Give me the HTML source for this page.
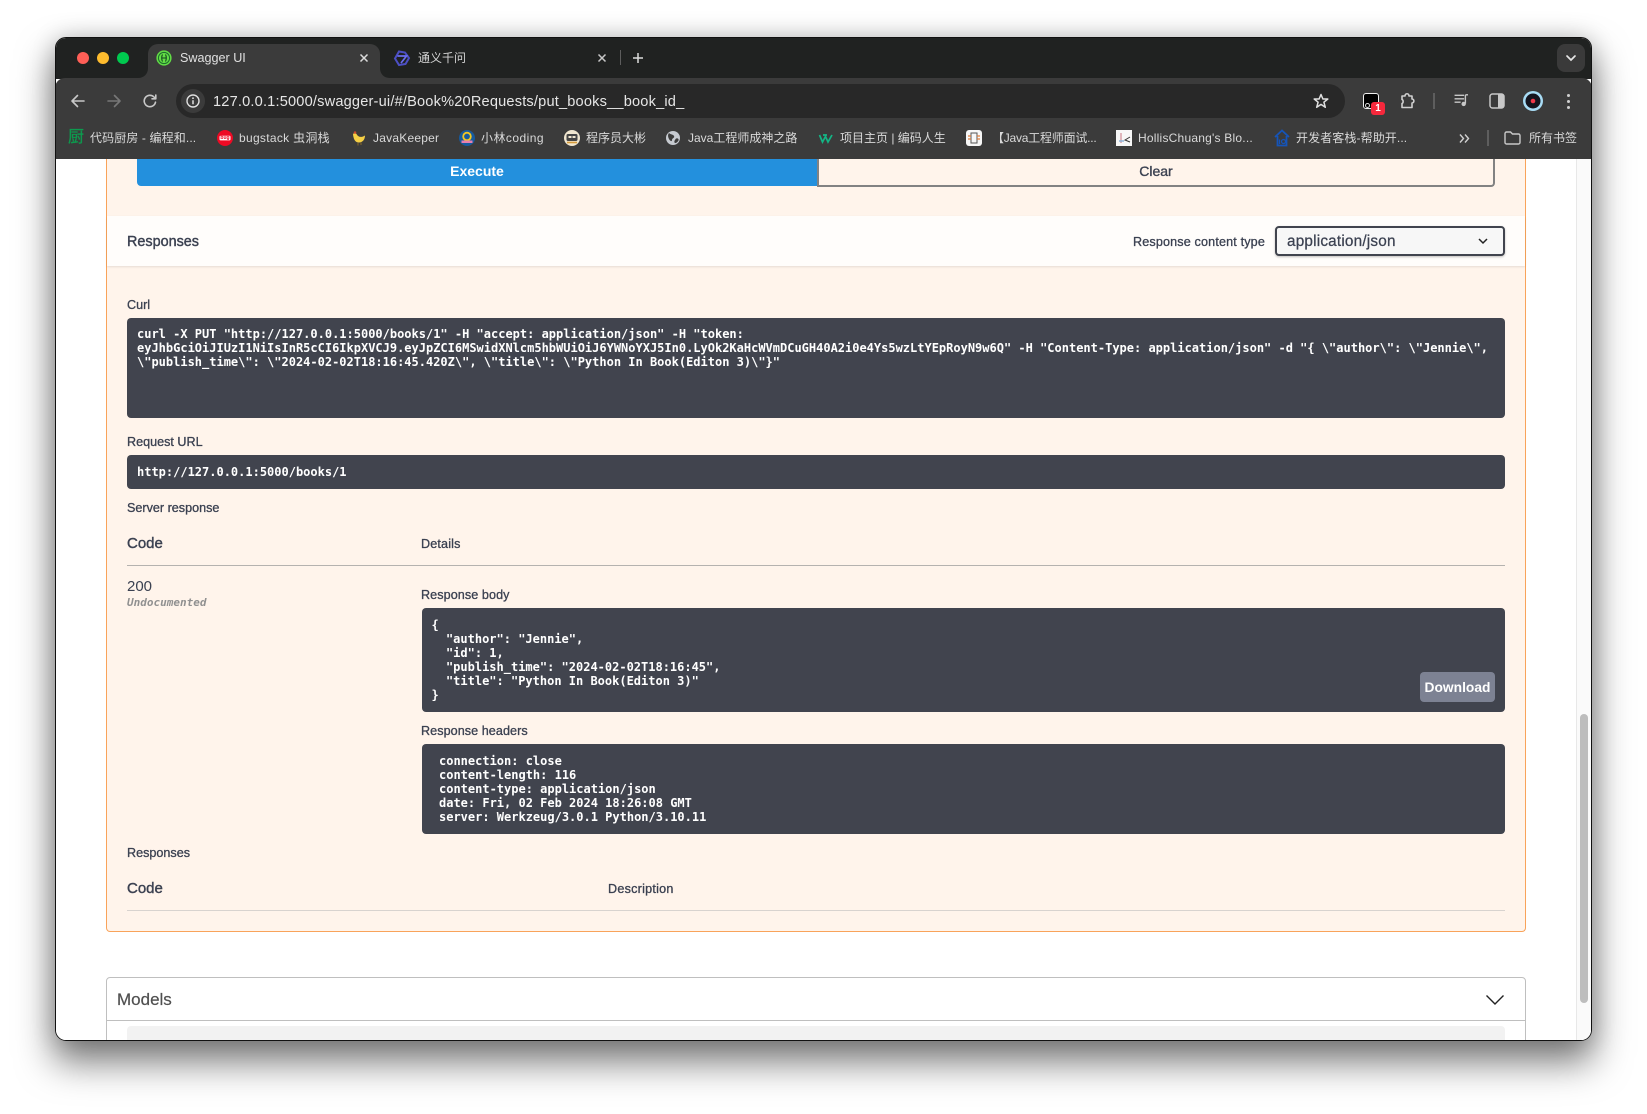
<!DOCTYPE html>
<html lang="zh"><head><meta charset="utf-8"><title>Swagger UI</title>
<style>
html,body{margin:0;padding:0;width:1647px;height:1114px;background:#fff;overflow:hidden}
*{box-sizing:border-box}
body{font-family:"Liberation Sans","Noto Sans CJK SC",sans-serif;position:relative}
.a{position:absolute;white-space:pre}
#win{position:absolute;left:55px;top:37px;width:1537px;height:1004px;border-radius:11px;box-shadow:0 20px 36px 2px rgba(0,0,0,.5),0 0 24px rgba(0,0,0,.18)}
#clip{position:absolute;left:55px;top:37px;width:1537px;height:1004px;border-radius:11px;overflow:hidden;background:#fff;border:1px solid #111}
#page{position:absolute;left:-56px;top:-38px;width:1647px;height:1114px}
.b{color:#d9d9d9;font-size:12px;line-height:16px;top:130px}
.l{color:#3b4151;font-size:12.6px;line-height:16px;font-weight:400;-webkit-text-stroke:.3px #3b4151}
.m{color:#3b4151;font-size:15px;line-height:18px;-webkit-text-stroke:.4px #3b4151}
.box{position:absolute;background:#41444e;border-radius:4px}
pre{position:absolute;margin:0;color:#fff;font:bold 12.01px/14px "DejaVu Sans Mono","Liberation Mono",monospace}
svg{position:absolute;overflow:visible}
.ic{fill:none;stroke:#c8c8c8;stroke-width:1.6;stroke-linecap:round;stroke-linejoin:round}
</style></head><body>
<div id="win"></div>
<div id="clip"><div id="page">
<!-- tab strip -->
<div class="a" style="left:55px;top:37px;width:1537px;height:42px;background:#202221"></div>
<div class="a" style="left:55px;top:78px;width:1537px;height:81px;background:#3b3b3b;border-radius:10px 10px 0 0"></div>
<div class="a" style="left:148px;top:44px;width:232px;height:35px;background:#3b3b3b;border-radius:10px 10px 0 0"></div>
<svg style="left:138px;top:68px" width="10" height="10"><path d="M10 0V10H0C6 10 10 6 10 0Z" fill="#3b3b3b"/></svg>
<svg style="left:380px;top:68px" width="10" height="10"><path d="M0 0V10H10C4 10 0 6 0 0Z" fill="#3b3b3b"/></svg>
<div class="a" style="left:77px;top:52px;width:12px;height:12px;border-radius:50%;background:#ff5f57"></div>
<div class="a" style="left:97px;top:52px;width:12px;height:12px;border-radius:50%;background:#febc2e"></div>
<div class="a" style="left:117px;top:52px;width:12px;height:12px;border-radius:50%;background:#00c94f"></div>
<!-- swagger favicon -->
<svg style="left:156px;top:50px" width="16" height="16" viewBox="0 0 16 16"><circle cx="8" cy="8" r="7.6" fill="#62dd45"/><circle cx="8" cy="8" r="5.6" fill="none" stroke="#1d6b2d" stroke-width="1"/><path d="M5.2 8H10.8M6.5 4.5C5.5 6 5.5 10 6.500 11.500M9.500 4.500C10.500 6 10.500 10 9.500 11.500" fill="none" stroke="#14451f" stroke-width="1.1"/></svg>
<div class="a" style="left:180px;top:50px;color:#e0e0e0;font-size:12.6px;line-height:16px">Swagger UI</div>
<svg style="left:360px;top:54px" width="8" height="8"><path d="M.5 .5L7.500 7.500M7.500 .5L.5 7.500" stroke="#dcdcdc" stroke-width="1.500"/></svg>
<!-- tab 2 -->
<svg style="left:394px;top:50px" width="16" height="17" viewBox="0 0 16 17"><path d="M5 1.500L11 2.500L15 8L11.500 14L5 15L1 8.500Z" fill="none" stroke="#4c4fc4" stroke-width="2"/><path d="M3.500 6H12.500L7 13" fill="none" stroke="#6a6df0" stroke-width="1.700"/></svg>
<div class="a" style="left:418px;top:50px;color:#d4d4d4;font-size:12px;line-height:16px">通义千问</div>
<svg style="left:598px;top:54px" width="8" height="8"><path d="M.5 .5L7.500 7.500M7.500 .5L.5 7.500" stroke="#c8c8c8" stroke-width="1.500"/></svg>
<div class="a" style="left:620px;top:50px;width:1px;height:15px;background:#5d5d5d"></div>
<svg style="left:633px;top:53px" width="10" height="10"><path d="M5 0V10M0 5H10" stroke="#dcdcdc" stroke-width="1.500"/></svg>
<div class="a" style="left:1557px;top:44px;width:28px;height:28px;border-radius:8px;background:#3a3a3a"></div>
<svg style="left:1566px;top:55px" width="10" height="7"><path d="M1 1L5 5L9 1" fill="none" stroke="#e6e6e6" stroke-width="1.700" stroke-linecap="round"/></svg>
<!-- toolbar -->
<svg class="ic" style="left:71px;top:94px" width="14" height="14" viewBox="0 0 14 14"><path d="M13 7H1.500M6.500 1.500L1 7L6.500 12.500"/></svg>
<svg class="ic" style="left:107px;top:94px;stroke:#777" width="14" height="14" viewBox="0 0 14 14"><path d="M1 7H12.500M7.500 1.500L13 7L7.500 12.500"/></svg>
<svg class="ic" style="left:143px;top:94px" width="14" height="14" viewBox="0 0 14 14"><path d="M12.500 8.200A5.700 5.700 0 1 1 11 3L12.800 4.800M12.800 1V4.800H9"/></svg>
<div class="a" style="left:176px;top:84px;width:1169px;height:34px;border-radius:17px;background:#282828"></div>
<div class="a" style="left:181px;top:89px;width:24px;height:24px;border-radius:50%;background:#3b3b3b"></div>
<svg style="left:186px;top:94px" width="14" height="14" viewBox="0 0 14 14"><circle cx="7" cy="7" r="6" fill="none" stroke="#e0e0e0" stroke-width="1.400"/><path d="M7 6.200V10.300" stroke="#e0e0e0" stroke-width="1.500"/><circle cx="7" cy="4.200" r=".9" fill="#e0e0e0"/></svg>
<div class="a" style="left:213px;top:93px;color:#e6e6e6;font-size:14.6px;line-height:18px;letter-spacing:.18px">127.0.0.1:5000/swagger-ui/#/Book%20Requests/put_books__book_id_</div>
<svg style="left:1313px;top:93px" width="16" height="16" viewBox="0 0 16 16"><path d="M8 1.500L9.900 6H14.800L10.900 9.200L12.300 14.300L8 11.400L3.700 14.300L5.100 9.200L1.200 6H6.100Z" fill="none" stroke="#e0e0e0" stroke-width="1.500" stroke-linejoin="round"/></svg>
<div class="a" style="left:1363px;top:93px;width:16px;height:16px;border-radius:3px;background:#000;border:1px solid #eee"></div>
<div class="a" style="left:1365px;top:103px;width:5px;height:5px;border-radius:50%;border:1px solid #ddd"></div>
<div class="a" style="left:1371px;top:102px;width:14px;height:13px;border-radius:3px;background:#f5283c;color:#fff;font:bold 10px/13px 'Liberation Sans',sans-serif;text-align:center">1</div>
<svg class="ic" style="left:1399px;top:92px;stroke:#d0d0d0" width="16" height="18" viewBox="0 0 16 18"><path d="M3 4H6C6 1 10 1 10 4H13V7C15.500 7 15.500 11 13 11V15.500H3V11.500C4.500 11 4.500 8 3 7.500Z"/></svg>
<div class="a" style="left:1433px;top:93px;width:2px;height:16px;background:#5e5e5e"></div>
<svg style="left:1454px;top:94px" width="15" height="13" viewBox="0 0 16 15"><path d="M0 1.500H11M0 5.500H11M0 9.500H7" stroke="#c8c8c8" stroke-width="1.600"/><path d="M12.500 1V11" stroke="#c8c8c8" stroke-width="1.600"/><path d="M12.500 1H15.500" stroke="#c8c8c8" stroke-width="1.600"/><circle cx="10.500" cy="11.500" r="2.500" fill="#c8c8c8"/></svg>
<svg style="left:1489px;top:93px" width="16" height="16" viewBox="0 0 16 16"><rect x="1" y="1" width="14" height="14" rx="2.500" fill="none" stroke="#c8c8c8" stroke-width="1.500"/><path d="M9 1H13A2 2 0 0 1 15 3V13A2 2 0 0 1 13 15H9Z" fill="#c8c8c8"/></svg>
<svg style="left:1523px;top:91px" width="20" height="20" viewBox="0 0 20 20"><circle cx="10" cy="10" r="10" fill="#a8dcf5"/><circle cx="10" cy="10" r="7.500" fill="#14141e"/><circle cx="10" cy="10" r="2.300" fill="#f0384a"/></svg>
<div class="a" style="left:1567px;top:93.500px;width:3px;height:3px;border-radius:50%;background:#d0d0d0"></div>
<div class="a" style="left:1567px;top:99.500px;width:3px;height:3px;border-radius:50%;background:#d0d0d0"></div>
<div class="a" style="left:1567px;top:105.500px;width:3px;height:3px;border-radius:50%;background:#d0d0d0"></div>
<!-- bookmarks -->
<div class="a" style="left:68px;top:129px;color:#0d9a4e;font-size:16px;line-height:18px;-webkit-text-stroke:.3px #0d9a4e">厨</div>
<div class="a b" style="left:90px;letter-spacing:.12px">代码厨房 - 编程和...</div>
<svg style="left:217px;top:130px" width="16" height="16" viewBox="0 0 16 16"><circle cx="8" cy="8" r="8" fill="#ee0a24"/><rect x="2.500" y="5.800" width="11" height="4.600" rx="1" fill="#fff"/></svg>
<div class="a" style="left:217px;top:130px;width:16px;text-align:center;font:bold 5px/16px 'Liberation Sans',sans-serif;color:#ee0a24">bug</div>
<div class="a b" style="left:239px;letter-spacing:.3px">bugstack 虫洞栈</div>
<svg style="left:351px;top:130px" width="16" height="17" viewBox="0 0 16 17"><path d="M2 4.500C2 3 4.500 2.500 5.500 4C7 7 10 8 14 5.500C14 10 11 13 7 12.500C3.500 12 2.500 8 2 4.500Z" fill="#f5cf45"/><circle cx="4" cy="2.500" r="1.300" fill="#c9482e"/><path d="M7 13V15.500M10 12.500V15" stroke="#8a6a2a" stroke-width="1"/></svg>
<div class="a b" style="left:373px;letter-spacing:.22px">JavaKeeper</div>
<svg style="left:459px;top:130px" width="16" height="16" viewBox="0 0 16 16"><circle cx="8" cy="8" r="8" fill="#175a9c"/><circle cx="8" cy="6.500" r="3.800" fill="none" stroke="#f2c623" stroke-width="1.800"/><path d="M2.500 10.500H13.500V13H2.500Z" fill="#e77fb0"/></svg>
<div class="a b" style="left:481px;letter-spacing:.45px">小林coding</div>
<svg style="left:564px;top:130px" width="16" height="16" viewBox="0 0 16 16"><circle cx="8" cy="8" r="8" fill="#f0e6cf"/><rect x="2.500" y="4" width="11" height="7" rx="1.500" fill="#454545"/><rect x="4.500" y="6" width="3" height="2" fill="#f0e6cf"/><rect x="8.500" y="6" width="3" height="2" fill="#f0e6cf"/><path d="M3 12.500H13" stroke="#d59a3a" stroke-width="1.600"/></svg>
<div class="a b" style="left:586px">程序员大彬</div>
<svg style="left:666px;top:131px" width="14" height="14" viewBox="0 0 14 14"><circle cx="7" cy="7" r="7" fill="#c6cad0"/><path d="M3 2C5 4 7 3 8 5C9 7 6 7 6 9C6 11 4 10 3 8C2 6 1.500 4 3 2ZM10 7.500C12 7 13 8 12.500 9.500C11 12 9 12.500 8.500 11.500C8 10 9 9 10 7.500Z" fill="#3b3b3b"/></svg>
<div class="a b" style="left:688px">Java工程师成神之路</div>
<svg style="left:819px;top:134px" width="14" height="9" viewBox="0 0 14 9"><path d="M.5 1L3.500 8L6.500 2.500L9 8L13 1M4 1H8" fill="none" stroke="#13b585" stroke-width="1.700"/></svg>
<div class="a b" style="left:840px">项目主页 | 编码人生</div>
<div class="a" style="left:966px;top:130px;width:16px;height:16px;border-radius:3px;background:#f7f7f7"></div>
<svg style="left:966px;top:130px" width="16" height="16" viewBox="0 0 16 16"><rect x="5" y="3" width="6" height="10" fill="none" stroke="#555" stroke-width="1"/><path d="M2 6H5M11 6H14M2 9H5M11 9H14" stroke="#e07b39" stroke-width="1.200"/></svg>
<div class="a b" style="left:992px;letter-spacing:-.22px">【Java工程师面试...</div>
<div class="a" style="left:1116px;top:130px;width:16px;height:16px;background:#f7f7f7"></div>
<svg style="left:1116px;top:130px" width="16" height="16" viewBox="0 0 16 16"><path d="M5 3V13" stroke="#d8a0a8" stroke-width="1.500"/><path d="M3 11H8" stroke="#8fb4d8" stroke-width="1.500"/><path d="M14 7L9 10L14 12" fill="none" stroke="#333" stroke-width="1"/></svg>
<div class="a b" style="left:1138px;letter-spacing:.22px">HollisChuang's Blo...</div>
<svg style="left:1274px;top:129px" width="16" height="18" viewBox="0 0 16 18"><path d="M1 8L8 1.500L15 8M3.500 7V16.500H12.500V7" fill="none" stroke="#1554b8" stroke-width="1.800"/><circle cx="9.500" cy="12.500" r="2" fill="none" stroke="#1554b8" stroke-width="1.200"/><path d="M5.500 10.500V15" stroke="#1554b8" stroke-width="1.200"/></svg>
<div class="a b" style="left:1296px;letter-spacing:.1px">开发者客栈-帮助开...</div>
<svg style="left:1459px;top:134px" width="11" height="9" viewBox="0 0 11 9"><path d="M1 .5L4.500 4.500L1 8.500M6 .5L9.500 4.500L6 8.500" fill="none" stroke="#d0d0d0" stroke-width="1.400"/></svg>
<div class="a" style="left:1487px;top:130px;width:2px;height:16px;background:#5e5e5e"></div>
<svg style="left:1504px;top:131px" width="17" height="14" viewBox="0 0 17 14"><path d="M1 2.500A1.500 1.500 0 0 1 2.500 1H6.500L8.500 3H14.500A1.500 1.500 0 0 1 16 4.500V11.500A1.500 1.500 0 0 1 14.500 13H2.500A1.500 1.500 0 0 1 1 11.500Z" fill="none" stroke="#c8c8c8" stroke-width="1.400"/></svg>
<div class="a b" style="left:1529px">所有书签</div>

<!-- content area -->
<div class="a" style="left:55px;top:159px;width:1537px;height:882px;background:#fff"></div>
<div class="a" style="left:1576px;top:159px;width:16px;height:882px;background:#fafafa;border-left:1px solid #e8e8e8"></div>
<div class="a" style="left:1580px;top:714px;width:8px;height:289px;border-radius:4px;background:#bdbdbd"></div>
<!-- opblock -->
<div class="a" style="left:106px;top:159px;width:1420px;height:773px;background:#fff4eb;border:1px solid #f9a35a;border-top:0;border-radius:0 0 4px 4px"></div>
<div class="a" style="left:137px;top:159px;width:680px;height:27px;background:#2390dd;border-radius:0 0 0 4px;color:#fff;font:bold 14px/24px 'Liberation Sans',sans-serif;text-align:center">Execute</div>
<div class="a m" style="left:817px;top:159px;width:678px;height:28px;border:2px solid #828282;border-top:0;border-radius:0 0 4px 0;font-size:14px;line-height:24px;text-align:center;-webkit-text-stroke:.35px #3b4151">Clear</div>
<!-- responses bar -->
<div class="a" style="left:107px;top:216px;width:1418px;height:50px;background:#fffdfb;box-shadow:0 1px 2px rgba(0,0,0,.1)"></div>
<div class="a m" style="left:127px;top:232px;font-size:14.4px;line-height:20px">Responses</div>
<div class="a l" style="left:1133px;top:234px;letter-spacing:.15px">Response content type</div>
<div class="a" style="left:1275px;top:226px;width:230px;height:30px;background:#f7f7f7;border:2px solid #41444e;border-radius:4px;box-shadow:0 1px 2px rgba(0,0,0,.25)"></div>
<div class="a" style="left:1287px;top:233px;color:#3b4151;font-size:15.3px;line-height:18px;letter-spacing:.2px;-webkit-text-stroke:.25px #3b4151">application/json</div>
<svg style="left:1478px;top:238px" width="10" height="7"><path d="M1 1L5 5L9 1" fill="none" stroke="#222" stroke-width="1.500"/></svg>
<!-- curl -->
<div class="a l" style="left:127px;top:297px">Curl</div>
<div class="box" style="left:127px;top:318px;width:1378px;height:100px"></div>
<pre style="left:137px;top:327px">curl -X PUT "http://127.0.0.1:5000/books/1" -H "accept: application/json" -H "token:
eyJhbGciOiJIUzI1NiIsInR5cCI6IkpXVCJ9.eyJpZCI6MSwidXNlcm5hbWUiOiJ6YWNoYXJ5In0.LyOk2KaHcWVmDCuGH40A2i0e4Ys5wzLtYEpRoyN9w6Q" -H "Content-Type: application/json" -d "{ \"author\": \"Jennie\",
\"publish_time\": \"2024-02-02T18:16:45.420Z\", \"title\": \"Python In Book(Editon 3)\"}"</pre>
<div class="a l" style="left:127px;top:434px">Request URL</div>
<div class="box" style="left:127px;top:455px;width:1378px;height:34px"></div>
<pre style="left:137px;top:465px">http://127.0.0.1:5000/books/1</pre>
<div class="a l" style="left:127px;top:500px">Server response</div>
<div class="a m" style="left:127px;top:535px">Code</div>
<div class="a l" style="left:421px;top:536px;letter-spacing:.15px">Details</div>
<div class="a" style="left:127px;top:565px;width:1378px;height:1px;background:#b5b2af"></div>
<div class="a" style="left:127px;top:578px;color:#3b4151;font-size:15px;line-height:18px">200</div>
<div class="a" style="left:127px;top:596px;color:#909090;font:italic bold 11px/14px 'DejaVu Sans Mono','Liberation Mono',monospace">Undocumented</div>
<div class="a l" style="left:421px;top:587px;letter-spacing:.08px">Response body</div>
<div class="box" style="left:421.500px;top:608px;width:1083px;height:104px"></div>
<pre style="left:431.500px;top:618px">{
  "author": "Jennie",
  "id": 1,
  "publish_time": "2024-02-02T18:16:45",
  "title": "Python In Book(Editon 3)"
}</pre>
<div class="a" style="left:1420px;top:672px;width:75px;height:30px;background:#7d8293;border-radius:4px;color:#fff;font:bold 13.8px/31px 'Liberation Sans',sans-serif;text-align:center">Download</div>
<div class="a l" style="left:421px;top:723px;letter-spacing:.06px">Response headers</div>
<div class="box" style="left:421.500px;top:744px;width:1083px;height:90px"></div>
<pre style="left:439px;top:754px">connection: close
content-length: 116
content-type: application/json
date: Fri, 02 Feb 2024 18:26:08 GMT
server: Werkzeug/3.0.1 Python/3.10.11</pre>
<div class="a l" style="left:127px;top:845px">Responses</div>
<div class="a m" style="left:127px;top:880px">Code</div>
<div class="a l" style="left:608px;top:881px;letter-spacing:.24px">Description</div>
<div class="a" style="left:127px;top:910px;width:1378px;height:1px;background:#d8d3cf"></div>
<!-- models -->
<div class="a" style="left:106px;top:977px;width:1420px;height:80px;background:#fff;border:1px solid #bfbfbf;border-radius:4px 4px 0 0"></div>
<div class="a" style="left:107px;top:1020px;width:1418px;height:1px;background:#bfbfbf"></div>
<div class="a" style="left:117px;top:990px;color:#505050;font-size:17px;line-height:20px;-webkit-text-stroke:.2px #505050">Models</div>
<svg style="left:1486px;top:995px" width="18" height="10"><path d="M.5 .5L9 9L17.500 .5" fill="none" stroke="#222" stroke-width="1.400"/></svg>
<div class="a" style="left:127px;top:1026px;width:1378px;height:30px;background:#f2f2f2;border-radius:4px"></div>
</div></div>
</body></html>
